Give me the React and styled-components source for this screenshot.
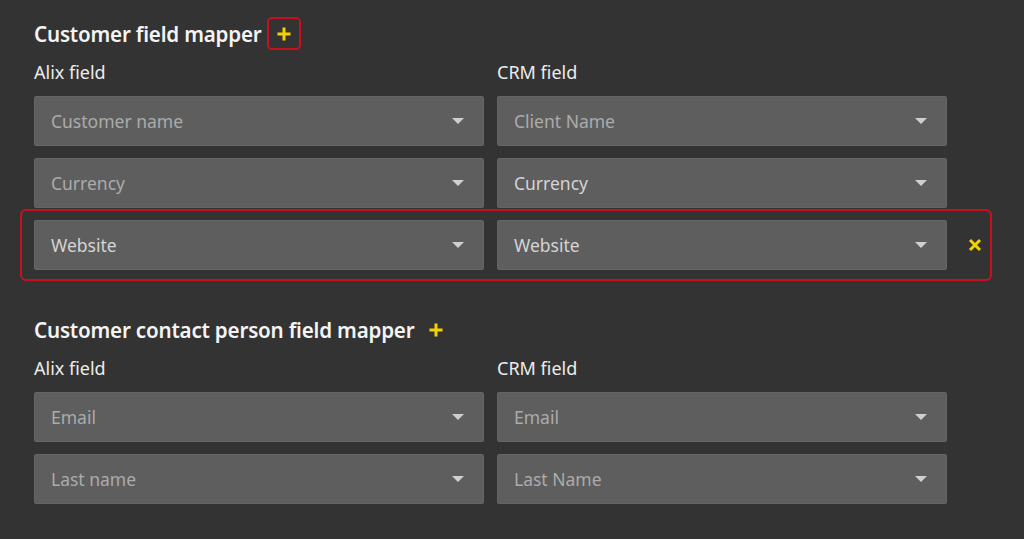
import React from "react";
import styled, { createGlobalStyle } from "styled-components";

const GlobalStyle = createGlobalStyle`
    html, body {
        margin: 0;
        padding: 0;
        background: #333333;
    }
    body {
        font-family: "Noto Sans", "Open Sans", "Liberation Sans", sans-serif;
        color: #f2f2f2;
    }
`

const Page = styled.div`
    width: 1024px;
    height: 539px;
    overflow: hidden;
    background: #333333;
    padding: 17px 0 0 34px;
    box-sizing: border-box;
`

const Section = styled.section`
    display: flex;
    flex-direction: column;
    margin-bottom: 43px;
`

const TitleRow = styled.div`
    display: flex;
    align-items: center;
    gap: ${props => props.$boxed ? "5px" : "13px"};
    height: 33px;
    margin-bottom: 10px;
`

const Title = styled.h2`
    margin: 0;
    font-size: 20.6px;
    font-weight: 600;
    letter-spacing: -0.2px;
    color: #f4f4f4;
`

const AddButton = styled.button`
    display: flex;
    align-items: center;
    justify-content: center;
    width: ${props => props.$boxed ? "34px" : "18px"};
    height: 33px;
    padding: 0;
    background: transparent;
    border: ${props => props.$boxed ? "2px solid #c8101e" : "none"};
    border-radius: 5px;
    box-sizing: border-box;
    cursor: pointer;
`

const Grid = styled.div`
    display: grid;
    grid-template-columns: 450px 450px;
    column-gap: 13px;
`

const Label = styled.div`
    font-size: 18px;
    line-height: 24px;
    color: #ececec;
    margin-bottom: 12px;
`

const Rows = styled.div`
    display: flex;
    flex-direction: column;
    gap: 12px;
`

const Row = styled.div`
    display: flex;
    align-items: center;
    gap: 13px;
    ${props => props.$highlight && `
        border: 2px solid #c8101e;
        border-radius: 6px;
        padding: 9px 0 9px 12px;
        margin: -11px 0 -11px -14px;
        width: 972px;
        box-sizing: border-box;
    `}
`

const Select = styled.div`
    display: flex;
    flex-shrink: 0;
    align-items: center;
    justify-content: space-between;
    width: 450px;
    height: 50px;
    padding: 0 19px 0 16px;
    box-sizing: border-box;
    background: #5e5e5e;
    border: 1px solid #656565;
    border-radius: 2px;
    font-size: 17.5px;
    color: ${props => props.$filled ? "#d4d4d4" : "#ababab"};
    cursor: pointer;
`

const Caret = styled.span`
    width: 0;
    height: 0;
    border-left: 6px solid transparent;
    border-right: 6px solid transparent;
    border-top: 6px solid #cfcfcf;
`

const RemoveButton = styled.button`
    display: flex;
    flex-shrink: 0;
    align-items: center;
    justify-content: center;
    width: 30px;
    height: 30px;
    padding: 0;
    background: transparent;
    border: none;
    cursor: pointer;
`

const YELLOW = "#f5d000";

function PlusIcon() {
    return (
        <svg width="16" height="16" viewBox="0 0 16 16">
            <path d="M8 1.5v13M1.5 8h13" stroke={YELLOW} strokeWidth="3" />
        </svg>
    );
}

function CrossIcon() {
    return (
        <svg width="14" height="14" viewBox="0 0 14 14">
            <path d="M2 2l10 10M12 2L2 12" stroke={YELLOW} strokeWidth="3" />
        </svg>
    );
}

const sections = [
    {
        title: "Customer field mapper",
        boxed: true,
        rows: [
            { alix: "Customer name", crm: "Client Name" },
            { alix: "Currency", crm: "Currency", crmFilled: true },
            { alix: "Website", crm: "Website", alixFilled: true, crmFilled: true, highlight: true },
        ],
    },
    {
        title: "Customer contact person field mapper",
        boxed: false,
        rows: [
            { alix: "Email", crm: "Email" },
            { alix: "Last name", crm: "Last Name" },
        ],
    },
];

function Mapper({ section }) {
    return (
        <Section>
            <TitleRow $boxed={section.boxed}>
                <Title>{section.title}</Title>
                <AddButton $boxed={section.boxed}><PlusIcon /></AddButton>
            </TitleRow>
            <Grid>
                <Label>Alix field</Label>
                <Label>CRM field</Label>
            </Grid>
            <Rows>
                {section.rows.map((row, i) => (
                    <Row key={i} $highlight={row.highlight}>
                        <Select $filled={row.alixFilled}>{row.alix}<Caret /></Select>
                        <Select $filled={row.crmFilled}>{row.crm}<Caret /></Select>
                        {row.highlight && <RemoveButton><CrossIcon /></RemoveButton>}
                    </Row>
                ))}
            </Rows>
        </Section>
    );
}

function App() {
    return (
        <>
            <GlobalStyle />
            <Page>
                {sections.map((s, i) => <Mapper key={i} section={s} />)}
            </Page>
        </>
    );
}

export default App;
